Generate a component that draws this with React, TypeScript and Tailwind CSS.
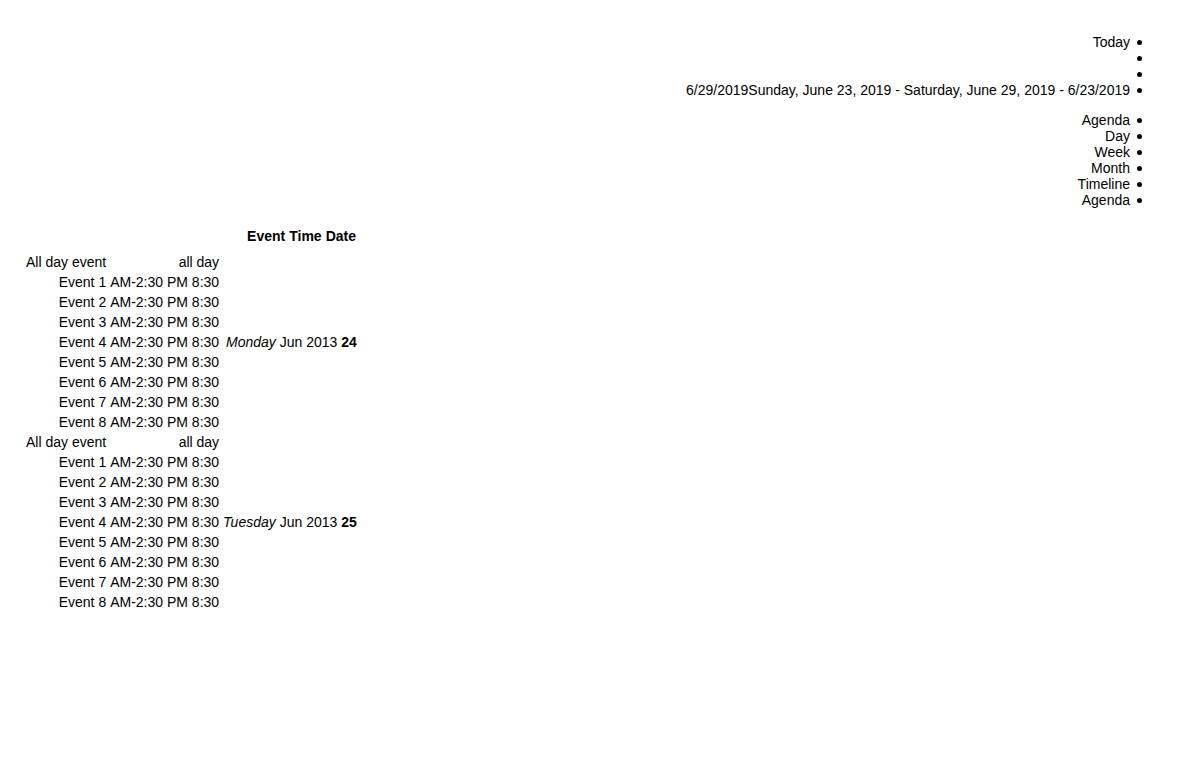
import { Fragment } from 'react'

const views = ['Agenda', 'Day', 'Week', 'Month', 'Timeline', 'Agenda']

const days = [
  { name: 'Monday', num: '24' },
  { name: 'Tuesday', num: '25' },
]

const events = ['Event 1', 'Event 2', 'Event 3', 'Event 4', 'Event 5', 'Event 6', 'Event 7', 'Event 8']

function Item({ children }: { children?: React.ReactNode }) {
  return (
    <li className="flex h-4 items-center justify-end gap-[7px]">
      {children}
      <span className="h-[5px] w-[5px] shrink-0 rounded-full bg-black" />
    </li>
  )
}

export default function App() {
  return (
    <div className="min-h-screen bg-white px-[20px] pt-[20px] font-['Liberation_Sans',Arial,sans-serif] text-[14px] leading-4 text-black">
      <ul className="my-[14px] pr-[28px]">
        <Item>Today</Item>
        <Item />
        <Item />
        <Item>6/29/2019Sunday, June 23, 2019 - Saturday, June 29, 2019 - 6/23/2019</Item>
      </ul>
      <ul className="my-[14px] pr-[28px]">
        {views.map((v, i) => (
          <Item key={i}>{v}</Item>
        ))}
      </ul>

      <div className="ml-[3px] w-[336px] whitespace-nowrap pt-[3px]">
        <div className="flex justify-end">
          <table className="border-separate border-spacing-[2px] font-bold">
            <thead>
              <tr>
                <th className="p-px font-bold">Event</th>
                <th className="p-px font-bold">Time</th>
                <th className="p-px font-bold">Date</th>
              </tr>
            </thead>
          </table>
        </div>

        <table className="mt-[4px] border-separate border-spacing-[2px]">
          <tbody>
            {days.map((d) => (
              <Fragment key={d.num}>
                <tr>
                  <td className="w-[82px] p-px text-right">All day event</td>
                  <td className="w-[111px] p-px text-right">all day</td>
                  <td rowSpan={9} className="w-[135px] p-px text-right align-middle">
                    <em className="italic">{d.name}</em> Jun 2013 <strong className="font-bold">{d.num}</strong>
                  </td>
                </tr>
                {events.map((e) => (
                  <tr key={e}>
                    <td className="p-px text-right">{e}</td>
                    <td className="p-px text-right">AM-2:30 PM 8:30</td>
                  </tr>
                ))}
              </Fragment>
            ))}
          </tbody>
        </table>
      </div>
    </div>
  )
}
